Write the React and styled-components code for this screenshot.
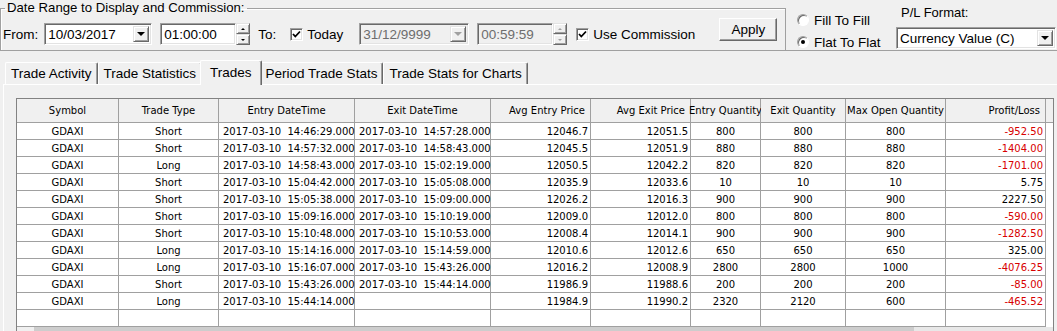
import React from 'react';
import styled, { createGlobalStyle } from 'styled-components';

const colours = {
  face: '#f0f0f0',
  shadow: '#a0a0a0',
  dark: '#696969',
  light: '#e3e3e3',
  white: '#ffffff',
  grid: '#a0a0a0',
  loss: '#d80000',
  disabled: '#6d6d6d',
};

const GlobalStyle = createGlobalStyle`
  html, body {
    margin: 0;
    padding: 0;
  }
  body {
    background: ${colours.face};
    font-family: 'Liberation Sans', Arial, sans-serif;
    font-size: 13.5px;
    color: #000;
    overflow: hidden;
  }
`;

const StyledWindow = styled.div`
  width: 1057px;
  height: 331px;
  overflow: hidden;
`;

const StyledTopBar = styled.div`
  display: flex;
  height: 50px;
  border-bottom: 1px solid ${colours.shadow};
`;

const StyledGroupBox = styled.fieldset`
  box-sizing: border-box;
  width: 786px;
  height: 50px;
  margin: 0;
  padding: 0 7px 0 2px;
  min-width: 0;
  border: 1px solid ${colours.shadow};
  border-bottom: none;
  box-shadow: inset 1px 1px 0 ${colours.white};
`;

const StyledLegend = styled.legend`
  margin-left: 2px;
  padding: 0 2px;
  font-size: 13.2px;
  line-height: 16px;
`;

const StyledControlRow = styled.div`
  display: flex;
  align-items: center;
  height: 22px;
  margin-top: 7px;
`;

const StyledCaption = styled.span`
  margin-right: ${({ $gap }) => $gap || 0}px;
  white-space: nowrap;
`;

const StyledField = styled.div`
  box-sizing: border-box;
  display: flex;
  width: ${({ $width }) => $width}px;
  height: 22px;
  padding: 2px;
  background: ${({ $disabled }) => ($disabled ? colours.face : colours.white)};
  border: 1px solid;
  border-color: ${colours.shadow} ${colours.white} ${colours.white} ${colours.shadow};
  box-shadow: inset 1px 1px 0 ${colours.dark}, inset -1px -1px 0 ${colours.light};
`;

const StyledFieldText = styled.span`
  flex: 1;
  display: flex;
  align-items: center;
  padding-left: 1px;
  white-space: nowrap;
  color: ${({ $disabled }) => ($disabled ? colours.disabled : 'inherit')};
`;

const StyledRaised = styled.span`
  box-sizing: border-box;
  display: flex;
  align-items: center;
  justify-content: center;
  background: ${colours.face};
  border: 1px solid;
  border-color: ${colours.light} ${colours.dark} ${colours.dark} ${colours.light};
  box-shadow: inset 1px 1px 0 ${colours.white}, inset -1px -1px 0 ${colours.shadow};
`;

const StyledDropButton = styled(StyledRaised)`
  width: 16px;
`;

const StyledArrow = styled.span`
  width: 0;
  height: 0;
  border-left: ${({ $size }) => $size}px solid transparent;
  border-right: ${({ $size }) => $size}px solid transparent;
  ${({ $up, $size, $colour }) =>
    $up
      ? `border-bottom: ${$size}px solid ${$colour};`
      : `border-top: ${$size}px solid ${$colour};`}
`;

const StyledSpinControl = styled.div`
  display: flex;
  margin-right: ${({ $gap }) => $gap || 0}px;
`;

const StyledSpinner = styled.div`
  display: flex;
  flex-direction: column;
  width: 14px;
  height: 22px;
`;

const StyledSpinButton = styled(StyledRaised)`
  flex: 1;
`;

const StyledComboWrap = styled.div`
  margin-right: ${({ $gap }) => $gap || 0}px;
`;

const StyledCheck = styled.label`
  display: flex;
  align-items: center;
  gap: 4px;
  margin-right: ${({ $gap }) => $gap || 0}px;
  white-space: nowrap;
`;

const StyledCheckBox = styled.span`
  box-sizing: border-box;
  display: flex;
  align-items: center;
  justify-content: center;
  width: 13px;
  height: 13px;
  background: ${colours.white};
  border: 1px solid;
  border-color: ${colours.shadow} ${colours.white} ${colours.white} ${colours.shadow};
  box-shadow: inset 1px 1px 0 ${colours.dark}, inset -1px -1px 0 ${colours.light};
`;

const StyledButton = styled.button`
  box-sizing: border-box;
  align-self: flex-start;
  margin-top: -5px;
  width: 58px;
  height: 23px;
  padding: 0;
  font: inherit;
  color: #000;
  background: ${colours.face};
  border: 1px solid;
  border-color: ${colours.white} ${colours.dark} ${colours.dark} ${colours.white};
  box-shadow: inset -1px -1px 0 ${colours.shadow};
`;

const StyledRadioColumn = styled.div`
  display: flex;
  flex-direction: column;
  gap: 6px;
  width: 99px;
  margin-left: 11px;
  padding-top: 12px;
`;

const StyledRadio = styled.label`
  display: flex;
  align-items: center;
  gap: 5px;
  height: 16px;
  white-space: nowrap;
`;

const StyledRadioDot = styled.span`
  box-sizing: border-box;
  display: flex;
  align-items: center;
  justify-content: center;
  width: 12px;
  height: 12px;
  border-radius: 50%;
  background: ${colours.white};
  border: 1px solid;
  border-color: ${colours.shadow} ${colours.white} ${colours.white} ${colours.shadow};
  box-shadow: inset 1px 1px 0 ${colours.dark};

  &::after {
    content: '';
    display: ${({ $checked }) => ($checked ? 'block' : 'none')};
    width: 4px;
    height: 4px;
    border-radius: 50%;
    background: #000;
  }
`;

const StyledFormatColumn = styled.div`
  padding-top: 5px;
`;

const StyledFormatLabel = styled.div`
  margin: 0 0 6px 5px;
  font-size: 13px;
  line-height: 16px;
`;

const StyledTabControl = styled.div`
  margin-left: 3px;
`;

const StyledTabStrip = styled.div`
  display: flex;
  align-items: flex-end;
  height: 33px;
  padding-left: 2px;
`;

const StyledTab = styled.div`
  box-sizing: border-box;
  position: relative;
  z-index: ${({ $active }) => ($active ? 1 : 0)};
  display: flex;
  align-items: center;
  height: ${({ $active }) => ($active ? 25 : 22)}px;
  margin: ${({ $active }) => ($active ? '0 -2px -1px' : '0')};
  padding: ${({ $active }) => ($active ? '0 9px 2px' : '0 5px')};
  background: ${colours.face};
  border: 1px solid ${colours.white};
  border-right-color: ${colours.dark};
  border-bottom: none;
  border-radius: 2px 2px 0 0;
  box-shadow: inset -1px 0 0 ${colours.shadow};
  white-space: nowrap;
`;

const StyledTabPanel = styled.div`
  height: 260px;
  padding: 13px 0 0 12px;
  border-top: 1px solid ${colours.white};
  border-left: 1px solid ${colours.white};
`;

const StyledGrid = styled.div`
  box-sizing: border-box;
  width: 1038px;
  background: ${colours.white};
  border: 1px solid #828282;
  font-family: 'DejaVu Sans', Verdana, sans-serif;
  font-size: 10px;
`;

const StyledGridRow = styled.div`
  display: grid;
  grid-template-columns: 102px 100px 136px 136px 100px 100px 70px 85px 100px 100px 7px;
  height: ${({ $header }) => ($header ? 24 : 17)}px;
`;

const StyledCell = styled.div`
  box-sizing: border-box;
  display: flex;
  align-items: center;
  justify-content: ${({ $align }) =>
    $align === 'left' ? 'flex-start' : $align === 'right' ? 'flex-end' : 'center'};
  padding: ${({ $header, $align }) =>
    $header ? '0 5px' : $align === 'left' ? '0 0 0 4px' : '0 2px'};
  background: ${({ $header }) => ($header ? colours.face : colours.white)};
  border-right: 1px solid ${colours.grid};
  border-bottom: 1px solid ${colours.grid};
  color: ${({ $loss }) => ($loss ? colours.loss : '#000')};
  white-space: pre;
`;

const StyledFillerCell = styled.div`
  background: ${({ $header }) => ($header ? colours.face : colours.white)};
  border-bottom: ${({ $header }) => ($header ? `1px solid ${colours.grid}` : 'none')};
`;

const StyledScrollbar = styled.div`
  display: flex;
  height: 17px;
  background: #e8e8e8;
`;

const StyledScrollArrow = styled.div`
  width: 17px;
  background: ${colours.face};
`;

const StyledScrollThumb = styled.div`
  width: 880px;
  background: #cdcdcd;
`;

const columns = [
  { title: 'Symbol', header: 'center', align: 'center' },
  { title: 'Trade Type', header: 'center', align: 'center' },
  { title: 'Entry DateTime', header: 'center', align: 'left' },
  { title: 'Exit DateTime', header: 'center', align: 'left' },
  { title: 'Avg Entry Price', header: 'right', align: 'right' },
  { title: 'Avg Exit Price', header: 'right', align: 'right' },
  { title: 'Entry Quantity', header: 'center', align: 'center' },
  { title: 'Exit Quantity', header: 'center', align: 'center' },
  { title: 'Max Open Quantity', header: 'center', align: 'center' },
  { title: 'Profit/Loss', header: 'right', align: 'right' },
];

const trades = [
  ['GDAXI', 'Short', '2017-03-10  14:46:29.000', '2017-03-10  14:57:28.000', '12046.7', '12051.5', '800', '800', '800', '-952.50'],
  ['GDAXI', 'Short', '2017-03-10  14:57:32.000', '2017-03-10  14:58:43.000', '12045.5', '12051.9', '880', '880', '880', '-1404.00'],
  ['GDAXI', 'Long', '2017-03-10  14:58:43.000', '2017-03-10  15:02:19.000', '12050.5', '12042.2', '820', '820', '820', '-1701.00'],
  ['GDAXI', 'Short', '2017-03-10  15:04:42.000', '2017-03-10  15:05:08.000', '12035.9', '12033.6', '10', '10', '10', '5.75'],
  ['GDAXI', 'Short', '2017-03-10  15:05:38.000', '2017-03-10  15:09:00.000', '12026.2', '12016.3', '900', '900', '900', '2227.50'],
  ['GDAXI', 'Short', '2017-03-10  15:09:16.000', '2017-03-10  15:10:19.000', '12009.0', '12012.0', '800', '800', '800', '-590.00'],
  ['GDAXI', 'Short', '2017-03-10  15:10:48.000', '2017-03-10  15:10:53.000', '12008.4', '12014.1', '900', '900', '900', '-1282.50'],
  ['GDAXI', 'Long', '2017-03-10  15:14:16.000', '2017-03-10  15:14:59.000', '12010.6', '12012.6', '650', '650', '650', '325.00'],
  ['GDAXI', 'Long', '2017-03-10  15:16:07.000', '2017-03-10  15:43:26.000', '12016.2', '12008.9', '2800', '2800', '1000', '-4076.25'],
  ['GDAXI', 'Short', '2017-03-10  15:43:26.000', '2017-03-10  15:44:14.000', '11986.9', '11988.6', '200', '200', '200', '-85.00'],
  ['GDAXI', 'Long', '2017-03-10  15:44:14.000', '', '11984.9', '11990.2', '2320', '2120', '600', '-465.52'],
  ['', '', '', '', '', '', '', '', '', ''],
];

const tabs = ['Trade Activity', 'Trade Statistics', 'Trades', 'Period Trade Stats', 'Trade Stats for Charts'];

const ComboBox = ({ value, width, disabled, gap }) => (
  <StyledComboWrap $gap={gap}>
    <StyledField $width={width} $disabled={disabled}>
      <StyledFieldText $disabled={disabled}>{value}</StyledFieldText>
      <StyledDropButton>
        <StyledArrow $size={4} $colour={disabled ? colours.shadow : '#000'} />
      </StyledDropButton>
    </StyledField>
  </StyledComboWrap>
);

const TimeField = ({ value, disabled, gap }) => {
  const arrowColour = disabled ? colours.shadow : '#000';
  return (
    <StyledSpinControl $gap={gap}>
      <StyledField $width={76} $disabled={disabled}>
        <StyledFieldText $disabled={disabled}>{value}</StyledFieldText>
      </StyledField>
      <StyledSpinner>
        <StyledSpinButton>
          <StyledArrow $up $size={2} $colour={arrowColour} />
        </StyledSpinButton>
        <StyledSpinButton>
          <StyledArrow $size={2} $colour={arrowColour} />
        </StyledSpinButton>
      </StyledSpinner>
    </StyledSpinControl>
  );
};

const CheckBox = ({ label, gap }) => (
  <StyledCheck $gap={gap}>
    <StyledCheckBox>
      <svg width="9" height="9" viewBox="0 0 9 9">
        <path d="M1 4 L3.3 6.5 L8 1.5" fill="none" stroke="#000" strokeWidth="1.8" />
      </svg>
    </StyledCheckBox>
    {label}
  </StyledCheck>
);

const TradesGrid = () => (
  <StyledGrid>
    <StyledGridRow $header>
      {columns.map(column => (
        <StyledCell key={column.title} $header $align={column.header}>
          {column.title}
        </StyledCell>
      ))}
      <StyledFillerCell $header />
    </StyledGridRow>
    {trades.map((trade, rowIndex) => (
      <StyledGridRow key={rowIndex}>
        {trade.map((value, colIndex) => (
          <StyledCell
            key={colIndex}
            $align={columns[colIndex].align}
            $loss={colIndex === 9 && value.startsWith('-')}
          >
            {value}
          </StyledCell>
        ))}
        <StyledFillerCell />
      </StyledGridRow>
    ))}
    <StyledScrollbar>
      <StyledScrollArrow />
      <StyledScrollThumb />
    </StyledScrollbar>
  </StyledGrid>
);

const App = () => (
  <>
    <GlobalStyle />
    <StyledWindow>
      <StyledTopBar>
        <StyledGroupBox>
          <StyledLegend>Date Range to Display and Commission:</StyledLegend>
          <StyledControlRow>
            <StyledCaption $gap={6}>From:</StyledCaption>
            <ComboBox value="10/03/2017" width={108} gap={8} />
            <TimeField value="01:00:00" gap={8} />
            <StyledCaption $gap={14}>To:</StyledCaption>
            <CheckBox label="Today" gap={16} />
            <ComboBox value="31/12/9999" width={110} gap={8} disabled />
            <TimeField value="00:59:59" gap={9} disabled />
            <CheckBox label="Use Commission" gap={24} />
            <StyledButton type="button">Apply</StyledButton>
          </StyledControlRow>
        </StyledGroupBox>
        <StyledRadioColumn>
          <StyledRadio>
            <StyledRadioDot />
            Fill To Fill
          </StyledRadio>
          <StyledRadio>
            <StyledRadioDot $checked />
            Flat To Flat
          </StyledRadio>
        </StyledRadioColumn>
        <StyledFormatColumn>
          <StyledFormatLabel>P/L Format:</StyledFormatLabel>
          <ComboBox value="Currency Value (C)" width={160} />
        </StyledFormatColumn>
      </StyledTopBar>
      <StyledTabControl>
        <StyledTabStrip>
          {tabs.map(tab => (
            <StyledTab key={tab} $active={tab === 'Trades'}>
              {tab}
            </StyledTab>
          ))}
        </StyledTabStrip>
        <StyledTabPanel>
          <TradesGrid />
        </StyledTabPanel>
      </StyledTabControl>
    </StyledWindow>
  </>
);

export default App;
